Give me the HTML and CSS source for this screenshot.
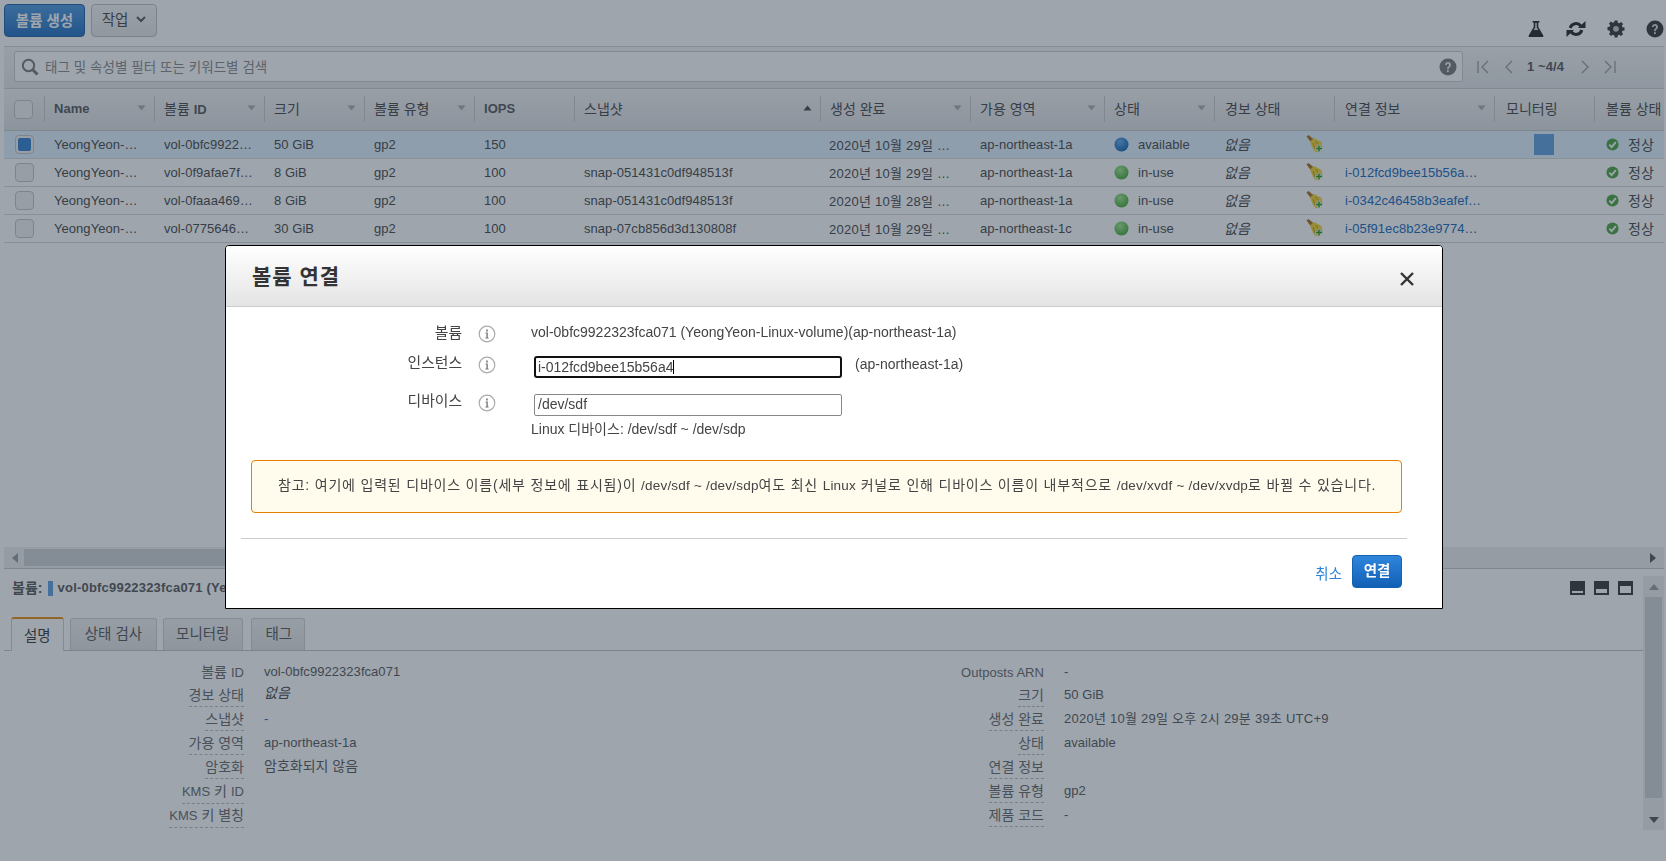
FILE: index.html
```html
<!DOCTYPE html>
<html lang="ko">
<head>
<meta charset="utf-8">
<title>볼륨 연결</title>
<link rel="stylesheet" href="styles.css">
</head>
<body>
<svg class="defs" width="0" height="0" aria-hidden="true">
  <defs>
    <radialGradient id="gblue" cx="40%" cy="30%" r="75%"><stop offset="0" stop-color="#5aa8ee"/><stop offset="1" stop-color="#0f5fb0"/></radialGradient>
    <radialGradient id="ggreen" cx="40%" cy="30%" r="75%"><stop offset="0" stop-color="#a0e88a"/><stop offset="1" stop-color="#3da82e"/></radialGradient>
    <symbol id="broom" viewBox="0 0 18 18">
      <path d="M.5 1.500 L2.500 0 L8 4.500 L5 7.500 Z" fill="#a8701c"/>
      <path d="M4 6.500 L8 3 L15.500 7 L16.500 13 L10 17.500 L7 14 Z" fill="#f4d42c"/>
      <path d="M7 8 L9.500 15 M9.500 6 L13 10.500" stroke="#b8961a" fill="none"/>
      <path d="M11.600 9.500h2.800v2.600H17v2.800h-2.600v2.600h-2.800v-2.600H9v-2.800h2.600z" fill="#e8f5e0"/>
      <path d="M12.300 10.500h1.400v2.300H16v1.400h-2.300v2.300h-1.400v-2.300H10v-1.400h2.300z" fill="#1f9a1f"/>
    </symbol>
    <symbol id="check" viewBox="0 0 14 14">
      <circle cx="7" cy="7" r="6.500" fill="#4aa53c"/>
      <path d="M3.600 7.200 L6.100 9.800 L10.600 4.400" fill="none" stroke="#fff" stroke-width="2"/>
    </symbol>
    <symbol id="info" viewBox="0 0 18 18">
      <circle cx="9" cy="9" r="7.800" fill="none" stroke="#aaa" stroke-width="1.200"/>
      <path d="M8.200 4.600h1.600v1.800H8.200zM7.600 7.600h2.200v5h.8v1H7.400v-1h1v-4h-.8z" fill="#777"/>
    </symbol>
    <symbol id="caret" viewBox="0 0 9 6"><path d="M.5 .5h8L4.500 5.500z" fill="#aaa"/></symbol>
  </defs>
</svg>

<div class="app">
  <header class="topbar">
    <button class="btn btn-primary">볼륨 생성</button>
    <button class="btn btn-default">작업
      <svg class="btn-caret" viewBox="0 0 10 7" width="10" height="7"><path d="M1 1 L5 5 L9 1" fill="none" stroke="#555" stroke-width="2"/></svg>
    </button>
    <div class="top-icons">
      <svg viewBox="0 0 18 18" width="18" height="18"><path d="M5.500 1h7v1.500h-1.200v4.500l5 8.500c.4.800 0 1.500-.9 1.500H2.600c-.9 0-1.300-.7-.9-1.500L6.700 7V2.500H5.500z" fill="#222"/><path d="M8.200 3h1.600v4.400L11.400 10H6.600l1.600-2.600z" fill="#d8d8d8"/></svg>
      <svg viewBox="0 0 20 18" width="20" height="18"><path d="M4.200 8 A6 6 0 0 1 14.800 6" fill="none" stroke="#222" stroke-width="3"/><path d="M12 8h7.500V1z" fill="#222"/><path d="M15.800 10 A6 6 0 0 1 5.200 12" fill="none" stroke="#222" stroke-width="3"/><path d="M8 10H.5v7z" fill="#222"/></svg>
      <svg viewBox="0 0 18 18" width="18" height="18"><path d="M7.500 1h3l.4 2.200 1.500.6 1.900-1.300 2.100 2.100-1.300 1.900.6 1.500 2.200.4v3l-2.200.4-.6 1.500 1.300 1.900-2.100 2.100-1.900-1.300-1.500.6-.4 2.200h-3l-.4-2.200-1.500-.6-1.900 1.300-2.100-2.100 1.300-1.900-.6-1.500L0 10.900v-3l2.200-.4.600-1.500L1.500 4.100l2.100-2.100 1.900 1.300 1.500-.6z" fill="#333" transform="translate(.5 -.4) scale(.95)"/><circle cx="9" cy="8.800" r="2.900" fill="#c6c6c6"/></svg>
      <svg viewBox="0 0 18 18" width="18" height="18"><circle cx="9" cy="9" r="8.500" fill="#333"/><path d="M6 7c0-4 6-4 6 0 0 2.200-2.300 2.200-2.300 4.200H8.100C8.100 8.500 10 8.500 10 7c0-1.600-2.300-1.600-2.300 0z" fill="#ddd"/><rect x="8" y="12.200" width="1.800" height="1.900" fill="#ddd"/></svg>
    </div>
  </header>

  <section class="filterbar">
    <div class="search">
      <svg class="search-icon" viewBox="0 0 18 18" width="18" height="18"><circle cx="7.500" cy="7.500" r="5.700" fill="none" stroke="#777" stroke-width="2"/><path d="M11.500 11.500 L16.500 16.500" stroke="#777" stroke-width="3"/></svg>
      <span class="placeholder">태그 및 속성별 필터 또는 키워드별 검색</span>
      <svg class="search-help" viewBox="0 0 18 18" width="18" height="18"><circle cx="9" cy="9" r="8.500" fill="#777"/><path d="M6 7c0-4 6-4 6 0 0 2.200-2.300 2.200-2.300 4.200H8.100C8.100 8.500 10 8.500 10 7c0-1.600-2.300-1.600-2.300 0z" fill="#eee"/><rect x="8" y="12.200" width="1.800" height="1.900" fill="#eee"/></svg>
    </div>
    <nav class="pager">
      <svg viewBox="0 0 12 14" width="12" height="14"><path d="M1 1v12M11 1 5 7l6 6" fill="none" stroke="#999" stroke-width="1.300"/></svg>
      <svg viewBox="0 0 9 14" width="9" height="14"><path d="M8 1 2 7l6 6" fill="none" stroke="#999" stroke-width="1.300"/></svg>
      <span class="pager-text">1 ~4/4</span>
      <svg viewBox="0 0 9 14" width="9" height="14"><path d="M1 1l6 6-6 6" fill="none" stroke="#999" stroke-width="1.300"/></svg>
      <svg viewBox="0 0 12 14" width="12" height="14"><path d="M1 1l6 6-6 6M11 1v12" fill="none" stroke="#999" stroke-width="1.300"/></svg>
    </nav>
  </section>

  <section class="table-area">
    <table class="grid">
      <colgroup>
        <col class="c0"><col class="c1"><col class="c2"><col class="c3"><col class="c4"><col class="c5"><col class="c6"><col class="c7"><col class="c8"><col class="c9"><col class="c10"><col class="c11"><col class="c12"><col class="c13">
      </colgroup>
      <thead>
        <tr>
          <th><span class="cb cb-head"></span></th>
          <th><span class="hd"><span><b class="la">Name</b></span><svg class="sort"><use href="#caret"/></svg></span></th>
          <th><span class="hd"><span>볼륨 <b class="la">ID</b></span><svg class="sort"><use href="#caret"/></svg></span></th>
          <th><span class="hd">크기<svg class="sort"><use href="#caret"/></svg></span></th>
          <th><span class="hd">볼륨 유형<svg class="sort"><use href="#caret"/></svg></span></th>
          <th><span class="hd"><span><b class="la">IOPS</b></span></span></th>
          <th><span class="hd">스냅샷<svg class="sort sort-up" viewBox="0 0 9 6"><path d="M.5 5.500h8L4.500 .5z" fill="#444"/></svg></span></th>
          <th><span class="hd">생성 완료<svg class="sort"><use href="#caret"/></svg></span></th>
          <th><span class="hd">가용 영역<svg class="sort"><use href="#caret"/></svg></span></th>
          <th><span class="hd">상태<svg class="sort"><use href="#caret"/></svg></span></th>
          <th><span class="hd">경보 상태</span></th>
          <th><span class="hd">연결 정보<svg class="sort"><use href="#caret"/></svg></span></th>
          <th><span class="hd">모니터링</span></th>
          <th><span class="hd">볼륨 상태</span></th>
        </tr>
      </thead>
      <tbody>
        <tr class="selected">
          <td><span class="cb cb-on"></span></td><td>YeongYeon-…</td><td>vol-0bfc9922…</td><td>50 GiB</td><td>gp2</td><td>150</td><td></td><td class="date">2020년 10월 29일 …</td><td>ap-northeast-1a</td>
          <td><span class="state"><svg class="dot"><circle cx="7.500" cy="7.500" r="7" fill="url(#gblue)"/></svg>available</span></td>
          <td><span class="alarm"><em>없음</em><svg class="broom"><use href="#broom"/></svg></span></td>
          <td></td><td class="mon"><span class="mon-box"></span></td>
          <td><span class="state state-ok"><svg class="ok"><use href="#check"/></svg>정상</span></td>
        </tr>
        <tr>
          <td><span class="cb"></span></td><td>YeongYeon-…</td><td>vol-0f9afae7f…</td><td>8 GiB</td><td>gp2</td><td>100</td><td>snap-051431c0df948513f</td><td class="date">2020년 10월 29일 …</td><td>ap-northeast-1a</td>
          <td><span class="state"><svg class="dot"><circle cx="7.500" cy="7.500" r="7" fill="url(#ggreen)"/></svg>in-use</span></td>
          <td><span class="alarm"><em>없음</em><svg class="broom"><use href="#broom"/></svg></span></td>
          <td><a class="link">i-012fcd9bee15b56a…</a></td><td></td>
          <td><span class="state state-ok"><svg class="ok"><use href="#check"/></svg>정상</span></td>
        </tr>
        <tr>
          <td><span class="cb"></span></td><td>YeongYeon-…</td><td>vol-0faaa469…</td><td>8 GiB</td><td>gp2</td><td>100</td><td>snap-051431c0df948513f</td><td class="date">2020년 10월 28일 …</td><td>ap-northeast-1a</td>
          <td><span class="state"><svg class="dot"><circle cx="7.500" cy="7.500" r="7" fill="url(#ggreen)"/></svg>in-use</span></td>
          <td><span class="alarm"><em>없음</em><svg class="broom"><use href="#broom"/></svg></span></td>
          <td><a class="link">i-0342c46458b3eafef…</a></td><td></td>
          <td><span class="state state-ok"><svg class="ok"><use href="#check"/></svg>정상</span></td>
        </tr>
        <tr>
          <td><span class="cb"></span></td><td>YeongYeon-…</td><td>vol-0775646…</td><td>30 GiB</td><td>gp2</td><td>100</td><td>snap-07cb856d3d130808f</td><td class="date">2020년 10월 29일 …</td><td>ap-northeast-1c</td>
          <td><span class="state"><svg class="dot"><circle cx="7.500" cy="7.500" r="7" fill="url(#ggreen)"/></svg>in-use</span></td>
          <td><span class="alarm"><em>없음</em><svg class="broom"><use href="#broom"/></svg></span></td>
          <td><a class="link">i-05f91ec8b23e9774…</a></td><td></td>
          <td><span class="state state-ok"><svg class="ok"><use href="#check"/></svg>정상</span></td>
        </tr>
      </tbody>
    </table>
  </section>

  <div class="hscroll">
    <svg viewBox="0 0 6 10" width="6" height="10"><path d="M6 0v10L0 5z" fill="#999"/></svg>
    <div class="hthumb"></div>
    <svg viewBox="0 0 6 10" width="6" height="10"><path d="M0 0v10l6-5z" fill="#555"/></svg>
  </div>

  <section class="details">
    <div class="details-main">
      <div class="details-title">
        <span class="title-key">볼륨:</span><span class="title-mark"></span><span class="title-val">vol-0bfc9922323fca071 (YeongYeon-Linux-volume)</span>
        <div class="pane-icons">
          <span class="pane-icon pane-a"></span><span class="pane-icon pane-b"></span><span class="pane-icon pane-c"></span>
        </div>
      </div>
      <div class="tabs">
        <span class="tab tab-on">설명</span><span class="tab">상태 검사</span><span class="tab">모니터링</span><span class="tab">태그</span>
      </div>
      <div class="fields">
        <dl class="col">
          <dt><span>볼륨 <i class="la">ID</i></span></dt><dd>vol-0bfc9922323fca071</dd>
          <dt><span class="dash">경보 상태</span></dt><dd><em>없음</em></dd>
          <dt><span class="dash">스냅샷</span></dt><dd><a class="link">-</a></dd>
          <dt><span class="dash">가용 영역</span></dt><dd>ap-northeast-1a</dd>
          <dt><span class="dash">암호화</span></dt><dd class="ko">암호화되지 않음</dd>
          <dt><span class="dash"><i class="la">KMS</i> 키 <i class="la">ID</i></span></dt><dd></dd>
          <dt><span class="dash"><i class="la">KMS</i> 키 별칭</span></dt><dd></dd>
        </dl>
        <dl class="col">
          <dt><span><i class="la">Outposts ARN</i></span></dt><dd>-</dd>
          <dt><span class="dash">크기</span></dt><dd>50 GiB</dd>
          <dt><span class="dash">생성 완료</span></dt><dd class="date">2020년 10월 29일 오후 2시 29분 39초 UTC+9</dd>
          <dt><span class="dash">상태</span></dt><dd>available</dd>
          <dt><span class="dash">연결 정보</span></dt><dd></dd>
          <dt><span class="dash">볼륨 유형</span></dt><dd>gp2</dd>
          <dt><span class="dash">제품 코드</span></dt><dd>-</dd>
        </dl>
      </div>
    </div>
    <div class="vscroll">
      <div class="varrow"><svg viewBox="0 0 10 6" width="10" height="6"><path d="M0 6h10L5 0z" fill="#999"/></svg></div>
      <div class="vthumb"></div>
      <div class="varrow"><svg viewBox="0 0 10 6" width="10" height="6"><path d="M0 0h10L5 6z" fill="#555"/></svg></div>
    </div>
  </section>
</div>

<div class="overlay"></div>

<div class="modal" role="dialog">
  <div class="modal-head">
    <h2>볼륨 연결</h2>
    <svg class="close" viewBox="0 0 14 14" width="14" height="14"><path d="M1 1 L13 13 M13 1 L1 13" stroke="#333" stroke-width="2.400"/></svg>
  </div>
  <div class="modal-body">
    <div class="form">
      <div class="row row-1">
        <label>볼륨</label>
        <svg class="info"><use href="#info"/></svg>
        <div class="val">vol-0bfc9922323fca071 (YeongYeon-Linux-volume)(ap-northeast-1a)</div>
      </div>
      <div class="row row-2">
        <label>인스턴스</label>
        <svg class="info"><use href="#info"/></svg>
        <div class="val val-input">
          <span class="input input-focus">i-012fcd9bee15b56a4<i class="text-caret"></i></span>
          <span class="az">(ap-northeast-1a)</span>
        </div>
      </div>
      <div class="row row-3">
        <label>디바이스</label>
        <svg class="info"><use href="#info"/></svg>
        <div class="val val-stack">
          <span class="input">/dev/sdf</span>
          <span class="hint">Linux 디바이스: /dev/sdf ~ /dev/sdp</span>
        </div>
      </div>
    </div>
    <div class="alert"><p><span class="ak">참고: 여기에 입력된 디바이스 이름(세부 정보에 표시됨)이 </span>/dev/sdf ~ /dev/sdp<span class="ak">여도 최신 </span>Linux<span class="ak"> 커널로 인해 디바이스 이름이 내부적으로 </span>/dev/xvdf ~ /dev/xvdp<span class="ak">로 바뀔 수 있습니다.</span></p></div>
    <hr class="rule">
    <div class="actions">
      <a class="cancel">취소</a>
      <button class="btn-attach">연결</button>
    </div>
  </div>
</div>
</body>
</html>
```

FILE: styles.css
```css
* { box-sizing: border-box; }
html, body { margin: 0; height: 100%; overflow: hidden; background: #fff; }
body {
  font-family: "Liberation Sans", "Noto Sans CJK KR", sans-serif;
  font-size: 13px;
  letter-spacing: .05px;
  color: #444;
}
.defs { position: absolute; }
.la { font-size: 13px; font-style: normal; letter-spacing: .05px; }
.ko { font-size: 14px; letter-spacing: 0; line-height: 22px; }
.date { letter-spacing: .25px; }
.app { width: 1666px; height: 861px; display: flex; flex-direction: column; padding-left: 4px; padding-right: 2px; }

/* top toolbar */
.topbar { height: 47px; flex: none; display: flex; align-items: flex-start; padding-top: 4px; gap: 6px; border-bottom: 1px solid #d4d4d4; }
.btn { height: 33px; border-radius: 4px; font: inherit; font-size: 14.5px; padding: 0; }
.btn-primary { width: 81px; color: #fff; font-weight: 700; border: 1px solid #1a5ea6; background: linear-gradient(#4a9be0, #1f6cc0); padding-bottom: 2px; }
.btn-default { width: 66px; color: #444; border: 1px solid #c0c0c0; background: linear-gradient(#f7f7f7, #e6e6e6); display: flex; align-items: center; justify-content: center; gap: 8px; padding-bottom: 4px; }
.btn-caret { margin-top: 1px; }
.top-icons { margin-left: auto; display: flex; align-items: center; gap: 21px; padding-top: 16px; }

/* filter bar */
.filterbar { height: 42px; flex: none; display: flex; align-items: flex-start; padding: 4px 0 0 10px; background: linear-gradient(#f5f5f5, #e5e6e7); border-bottom: 1px solid #ccc; }
.search { width: 1449px; height: 31px; background: #fff; border: 1px solid #ccc; border-radius: 3px; display: flex; align-items: center; padding: 0 6px; }
.search-icon { margin-right: 6px; }
.placeholder { color: #888; font-size: 13.5px; padding-bottom: 2px; }
.search-help { margin-left: auto; margin-right: -1px; }
.pager { display: flex; align-items: center; height: 31px; margin-left: 14px; }
.pager svg:nth-child(2) { margin-left: 15px; }
.pager-text { font-weight: 700; color: #555; margin: 0 17px 0 14px; letter-spacing: .1px; }
.pager svg:nth-child(5) { margin-left: 14px; }

/* data table */
.table-area { height: 458px; flex: none; overflow: hidden; }
.grid { width: 1660px; table-layout: fixed; border-collapse: collapse; }
.c0 { width: 40px; } .c1 { width: 110px; } .c2 { width: 110px; } .c3 { width: 100px; } .c4 { width: 110px; } .c5 { width: 100px; }
.c6 { width: 246px; } .c7 { width: 150px; } .c8 { width: 134px; } .c9 { width: 110px; } .c10 { width: 120px; } .c11 { width: 160px; } .c12 { width: 100px; } .c13 { width: 70px; }
.grid th { height: 41px; padding: 0; text-align: left; background: linear-gradient(#f4f4f4, #dfe0e1); border-bottom: 1px solid #c6c6c6; font-weight: 400; }
.grid th:first-child { padding-left: 10px; }
.hd { display: flex; align-items: center; height: 26px; padding-left: 9px; padding-right: 8px; padding-bottom: 2px; border-left: 1px solid #c8c8c8; white-space: nowrap; font-size: 14px; letter-spacing: 0; font-weight: 400; color: #444; }
.grid th:nth-child(n+11) .hd { padding-left: 10px; }
.grid th:nth-child(n+13) .hd { padding-left: 11px; }
.hd .la { font-weight: 700; color: #555; }
.sort { width: 9px; height: 6px; margin-left: auto; flex: none; }
.grid td { height: 28px; padding: 0 0 0 10px; border-bottom: 1px solid #d8d8d8; white-space: nowrap; overflow: hidden; }
.grid td:first-child { padding-left: 11px; }
.grid td.date { padding-left: 9px; }
.selected td { background: #e3f2fd; }
.cb { display: block; width: 19px; height: 19px; border: 1px solid #c4c4c4; border-radius: 4px; background: #f2f2f2; }
.cb-on { position: relative; background: #f2f2f2; }
.cb-on::after { content: ""; position: absolute; inset: 2px; border-radius: 2px; background: #2f7fd0; }
.state { display: flex; align-items: center; }
.dot { width: 15px; height: 15px; margin-right: 9px; flex: none; }
.ok { width: 13px; height: 13px; margin-right: 9px; flex: none; }
.state-ok { padding-left: 2px; font-size: 14px; letter-spacing: 0; }
.alarm { display: flex; align-items: center; }
.alarm em { color: #444; font-size: 14px; letter-spacing: 0; }
.col dd em { color: #444; font-size: 14px; letter-spacing: 0; line-height: 1; vertical-align: 1px; }
.broom { width: 18px; height: 18px; margin-left: 56px; flex: none; }
.link { color: #1166bb; }
.grid td .link { margin-left: 1px; }
.mon { text-align: left; }
.mon-box { display: block; width: 20px; height: 21px; margin-left: 30px; background: #5f9fe0; }

/* horizontal scrollbar */
.hscroll { height: 22px; flex: none; display: flex; align-items: center; padding: 0 8px; background: #eeeeee; border-bottom: 1px solid #c6c6c6; }
.hthumb { width: 1320px; height: 17px; margin-left: 6px; margin-right: auto; background: #d0d2d4; }

/* details pane */
.details { flex: 1; display: flex; min-height: 0; }
.details-main { width: 1639px; flex: none; }
.details-title { height: 48px; display: flex; align-items: flex-start; padding: 8px 10px 0 8px; line-height: 22px; }
.title-key { font-weight: 700; font-size: 14px; color: #555; }
.title-mark { width: 5px; height: 15px; margin: 4px 5px 0 5px; background: #5f9fe0; }
.title-val { font-weight: 700; color: #555; white-space: nowrap; letter-spacing: .2px; }
.pane-icons { margin-left: auto; display: flex; gap: 9px; padding-top: 4px; }
.pane-icon { width: 15px; height: 14px; background: #333; position: relative; }
.pane-icon::after { content: ""; position: absolute; left: 2px; right: 2px; bottom: 2px; background: #fff; }
.pane-a::after { height: 2px; }
.pane-b::after { height: 4px; }
.pane-c::after { height: 7px; }
.tabs { height: 34px; display: flex; align-items: flex-end; gap: 6px; padding-left: 7px; border-bottom: 1px solid #c4c4c4; }
.tab { height: 32px; padding: 0 14px 4px; display: flex; align-items: center; border: 1px solid #cfcfcf; border-bottom: 0; border-radius: 3px 3px 0 0; background: linear-gradient(#f2f2f2, #e2e2e2); color: #555; font-size: 14.5px; letter-spacing: 0; }
.tab:nth-child(3) { padding-left: 12px; padding-right: 13px; }
.tab:nth-child(4) { padding-left: 13px; padding-right: 12px; margin-left: 2px; }
.tab-on { height: 34px; margin-bottom: -1px; padding: 0 12px 2px; background: #fff; border-top: 2px solid #e88d0e; color: #333; }
.fields { display: flex; padding-top: 8.5px; }
.col { width: 800px; margin: 0; display: grid; grid-template-columns: 240px 1fr; grid-auto-rows: 23.9px; column-gap: 20px; line-height: 24px; }
.col dt { text-align: right; color: #666; font-size: 14px; letter-spacing: 0; }
.col dt span { display: inline-block; line-height: 22px; }
.col dt .dash { border-bottom: 1px dashed #bbb; }
.col dd { margin: 0; white-space: nowrap; color: #555; }

/* vertical scrollbar */
.vscroll { width: 21px; flex: none; margin: 7px 0 31px; display: flex; flex-direction: column; background: #eee; }
.varrow { height: 21px; flex: none; display: flex; align-items: center; justify-content: center; }
.vthumb { flex: 1; margin: 0 2px 17px 2px; background: #cfd1d3; }
.vscroll .varrow:last-child { margin-top: -6px; }

/* overlay and modal */
.overlay { position: fixed; inset: 0; background: rgba(40, 55, 73, .45); }
.modal { position: absolute; left: 225px; top: 245px; width: 1218px; height: 364px; background: #fff; border: 1px solid #000; border-radius: 4px 4px 0 0; font-size: 14px; letter-spacing: 0; }
.modal-head { height: 61px; display: flex; align-items: center; justify-content: space-between; padding: 0 28px 0 26px; background: linear-gradient(#fff, #e4e4e4); border-bottom: 1px solid #ccc; border-radius: 3px 3px 0 0; }
.modal-head h2 { margin: 0 0 2px; font-size: 21px; letter-spacing: 1px; font-weight: 700; color: #333; }
.close { margin-top: 6px; }
.modal-body { display: flex; flex-direction: column; }
.form { padding-top: 16px; }
.row { display: grid; grid-template-columns: 236px 18px 1fr; column-gap: 16px; align-items: start; }
.row label { text-align: right; line-height: 20px; color: #444; font-size: 14.8px; }
.info { width: 18px; height: 18px; margin-top: 2px; }
.val { line-height: 20px; margin-left: 19px; color: #444; white-space: nowrap; }
.row-1 { height: 33px; }
.row-1 .val { margin-top: -1px; }
.row-2 { height: 38px; }
.row-2 label { margin-top: -3px; }
.row-2 .info { margin-top: 0; }
.row-3 { height: 66px; }
.row-3 label { margin-top: -3px; }
.row-3 .info { margin-top: 0; }
.val-input { display: flex; align-items: center; gap: 13px; padding-left: 3px; }
.az { margin-top: -6px; }
.val-stack { display: flex; flex-direction: column; align-items: flex-start; }
.val-stack .input { margin-left: 3px; }
.input { position: relative; display: block; width: 308px; height: 22px; line-height: 19px; padding: 0 3px; border: 1px solid #888; border-radius: 2px; color: #444; }
.input-focus { border: 2px solid #111; padding: 0 2px; border-radius: 3px; line-height: 18px; }
.text-caret { display: inline-block; width: 1px; height: 14px; background: #000; vertical-align: -2px; }
.hint { margin-top: 3px; }
.alert { margin: 0 40px 0 25px; height: 53px; display: flex; align-items: center; padding-left: 26px; padding-bottom: 5px; background: #fffcee; border: 1px solid #e87f00; border-radius: 4px; color: #444; white-space: nowrap; font-size: 13.5px; letter-spacing: .2px; }
.alert p { margin: 0; }
.ak { font-size: 14px; letter-spacing: .8px; }
.rule { width: 1166px; margin: 25px 0 0 15px; border: 0; border-top: 1px solid #ccc; }
.actions { display: flex; justify-content: flex-end; align-items: flex-end; gap: 10px; padding: 16px 40px 0 0; }
.cancel { color: #2a84d8; line-height: 18px; padding-bottom: 5px; font-size: 14.5px; }
.btn-attach { width: 50px; height: 33px; border: 1px solid #1462b0; border-radius: 4px; background: linear-gradient(#2e86da, #1160b6); color: #fff; font: inherit; font-size: 14.5px; font-weight: 700; padding: 0 0 5px; }
```
